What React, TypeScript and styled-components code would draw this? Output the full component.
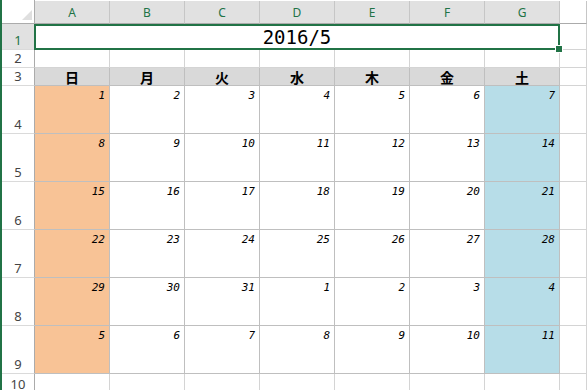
import styled, { createGlobalStyle } from "styled-components";
import React from "react";

const GlobalStyle = createGlobalStyle`
  html, body {
    margin: 0;
    padding: 0;
    background: #fff;
    overflow: hidden;
  }
`;

const COLS = ["A", "B", "C", "D", "E", "F", "G"];
const DAYS = ["日", "月", "火", "水", "木", "金", "土"];
const WEEKS = [
  [1, 2, 3, 4, 5, 6, 7],
  [8, 9, 10, 11, 12, 13, 14],
  [15, 16, 17, 18, 19, 20, 21],
  [22, 23, 24, 25, 26, 27, 28],
  [29, 30, 31, 1, 2, 3, 4],
  [5, 6, 7, 8, 9, 10, 11],
];

export default function App() {
  return (
    <>
      <GlobalStyle />
      <SWindow>
        <SSheet>
          <SCorner />
          {COLS.map((c) => (
            <SColHead key={c} $selected>
              {c}
            </SColHead>
          ))}
          <SColHead />

          <SRowHead $selected>1</SRowHead>
          <STitle>
            2016/5
            <SHandle />
          </STitle>
          <SCell />

          <SRowHead>2</SRowHead>
          {COLS.map((c) => (
            <SCell key={c} />
          ))}
          <SCell />

          <SRowHead>3</SRowHead>
          {DAYS.map((d) => (
            <SDayHead key={d}>{d}</SDayHead>
          ))}
          <SCell />

          {WEEKS.map((week, i) => (
            <React.Fragment key={i}>
              <SRowHead>{i + 4}</SRowHead>
              {week.map((n, j) => (
                <SDate key={j} $tone={j === 0 ? "sun" : j === 6 ? "sat" : undefined}>
                  {n}
                </SDate>
              ))}
              <SCell />
            </React.Fragment>
          ))}

          <SRowHead $top>10</SRowHead>
          {COLS.map((c) => (
            <SCell key={c} />
          ))}
          <SCell />
        </SSheet>
      </SWindow>
    </>
  );
}

const SWindow = styled.div`
  width: 587px;
  height: 390px;
  border-left: 2px solid #217346;
  box-sizing: border-box;
  overflow: hidden;
`;

const SSheet = styled.div`
  display: grid;
  grid-template-columns: 33px repeat(7, 75px) 1fr;
  grid-template-rows: 24px 26px 18px 18px repeat(6, 48px) 24px;
  > * {
    box-sizing: border-box;
  }
`;

const SCorner = styled.div`
  position: relative;
  background: #fff;
  border-right: 1px solid #ababab;
  border-bottom: 1px solid #ababab;
  &::after {
    content: "";
    position: absolute;
    right: 2px;
    bottom: 3px;
    width: 0;
    height: 0;
    border-left: 10px solid transparent;
    border-bottom: 10px solid #dfdfdf;
  }
`;

const SColHead = styled.div<{ $selected?: boolean }>`
  display: flex;
  align-items: center;
  justify-content: center;
  padding-top: 1px;
  margin-top: 1px;
  background: ${(p) => (p.$selected ? "#e1e1e1" : "#fff")};
  color: ${(p) => (p.$selected ? "#217346" : "#444")};
  border-right: 1px solid #c6c6c6;
  border-bottom: 1px solid #ababab;
  font-family: "Noto Sans", "Liberation Sans", sans-serif;
  font-size: 12px;
`;

const SRowHead = styled.div<{ $selected?: boolean; $top?: boolean }>`
  display: flex;
  align-items: ${(p) => (p.$top ? "flex-start" : "flex-end")};
  justify-content: center;
  padding-top: ${(p) => (p.$top ? "2px" : "0")};
  background: ${(p) => (p.$selected ? "#e1e1e1" : "#fff")};
  color: ${(p) => (p.$selected ? "#217346" : "#444")};
  border-right: 1px solid #ababab;
  border-bottom: 1px solid #dadada;
  font-family: "Noto Sans", "Liberation Sans", sans-serif;
  font-size: 13px;
  line-height: 17px;
`;

const SCell = styled.div`
  background: #fff;
  border-right: 1px solid #d4d4d4;
  border-bottom: 1px solid #d4d4d4;
`;

const STitle = styled.div`
  grid-column: span 7;
  position: relative;
  display: flex;
  align-items: center;
  justify-content: center;
  margin-left: -1px;
  border: 2px solid #217346;
  background: #fff;
  font-family: "DejaVu Sans Mono", monospace;
  font-size: 19px;
  color: #000;
`;

const SHandle = styled.span`
  position: absolute;
  right: -5px;
  bottom: -5px;
  width: 6px;
  height: 6px;
  background: #217346;
  border: 1px solid #fff;
`;

const SDayHead = styled.div`
  display: flex;
  align-items: center;
  justify-content: center;
  background: #d9d9d9;
  border-right: 1px solid #bfbfbf;
  border-bottom: 1px solid #bfbfbf;
  font-family: "Noto Sans CJK JP", sans-serif;
  font-size: 14px;
  font-weight: 700;
  color: #000;
`;

const SDate = styled.div<{ $tone?: "sun" | "sat" }>`
  background: ${(p) => (p.$tone === "sun" ? "#f8c396" : p.$tone === "sat" ? "#b7dde8" : "#fff")};
  border-right: 1px solid #bfbfbf;
  border-bottom: 1px solid #bfbfbf;
  padding: 3px 4px 0 0;
  text-align: right;
  font-family: "DejaVu Sans Mono", monospace;
  font-style: italic;
  font-size: 11px;
  line-height: 14px;
  color: #000;
`;
